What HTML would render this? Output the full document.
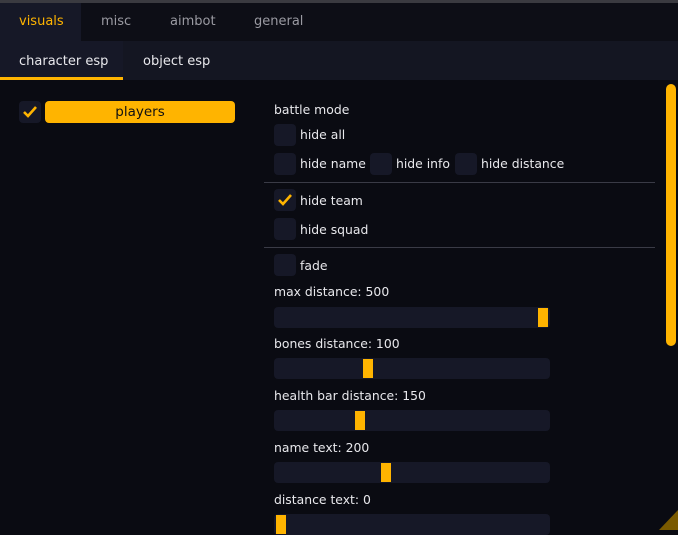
<!DOCTYPE html><html><head><style>
*{margin:0;padding:0;box-sizing:border-box}
html,body{width:678px;height:530px}
body{background:#0a0b12;font-family:"DejaVu Sans","Liberation Sans",sans-serif;font-size:12.4px;color:#e8e8ec;position:relative;overflow:hidden}
.a{position:absolute}
.cb{position:absolute;width:22px;height:22px;background:#161827;border-radius:4px}
.t{position:absolute;line-height:16px;white-space:nowrap}
.sl{position:absolute;left:274px;width:276px;height:21px;background:#161827;border-radius:4px}
.th{position:absolute;top:1px;width:10px;height:19px;background:#ffb400}
.ck svg{position:absolute;left:3px;top:4px}
</style></head><body>
<div class="a" style="left:0;top:0;width:678px;height:3px;background:#3a3a40"></div>
<div class="a" style="left:0;top:3px;width:678px;height:38px;background:#0d0e16"></div>
<div class="a" style="left:0;top:3px;width:81px;height:38px;background:#161827"></div>
<div class="t" style="left:19px;top:14px;color:#ffb400;font-size:13px">visuals</div>
<div class="t" style="left:101px;top:14px;color:#9a9aa2;font-size:13px">misc</div>
<div class="t" style="left:170px;top:14px;color:#9a9aa2;font-size:13px">aimbot</div>
<div class="t" style="left:254px;top:14px;color:#9a9aa2;font-size:13px">general</div>
<div class="a" style="left:0;top:41px;width:678px;height:39px;background:#141622"></div>
<div class="a" style="left:0;top:41px;width:123px;height:39px;background:#161827"></div>
<div class="a" style="left:0;top:77px;width:123px;height:3px;background:#ffb400"></div>
<div class="t" style="left:19px;top:54px;font-size:13px">character esp</div>
<div class="t" style="left:143px;top:54px;font-size:13px">object esp</div>
<div class="cb ck" style="left:19px;top:101px"><svg width="16" height="14" viewBox="0 0 16 14"><path d="M2 7l4 4 8-9" stroke="#ffb400" stroke-width="2.6" fill="none"/></svg></div>
<div class="a" style="left:45px;top:101px;width:190px;height:22px;background:#ffb400;border-radius:4px;color:#111;text-align:center;line-height:23px;font-size:13.5px">players</div>
<div class="a" style="left:666px;top:84px;width:10px;height:262px;background:#ffb400;border-radius:5px"></div>
<svg class="a" style="left:659px;top:510px" width="19" height="20"><path d="M19 0V20H0Z" fill="#7a5a00"/></svg>
<div class="t" style="left:274px;top:102px">battle mode</div>
<div class="cb" style="left:274px;top:124px"></div><div class="t" style="left:300px;top:127px">hide all</div>
<div class="cb" style="left:274px;top:153px"></div><div class="t" style="left:300px;top:156px">hide name</div>
<div class="cb" style="left:370px;top:153px"></div><div class="t" style="left:396px;top:156px">hide info</div>
<div class="cb" style="left:455px;top:153px"></div><div class="t" style="left:481px;top:156px">hide distance</div>
<div class="a" style="left:264px;top:182px;width:391px;height:1px;background:#3a3b46"></div>
<div class="cb ck" style="left:274px;top:189px"><svg width="16" height="14" viewBox="0 0 16 14"><path d="M2 7l4 4 8-9" stroke="#ffb400" stroke-width="2.6" fill="none"/></svg></div><div class="t" style="left:300px;top:193px">hide team</div>
<div class="cb" style="left:274px;top:218px"></div><div class="t" style="left:300px;top:222px">hide squad</div>
<div class="a" style="left:264px;top:247px;width:391px;height:1px;background:#3a3b46"></div>
<div class="cb" style="left:274px;top:254px"></div><div class="t" style="left:300px;top:258px">fade</div>
<div class="t" style="left:274px;top:284px">max distance: 500</div>
<div class="sl" style="top:307px"><div class="th" style="left:264px"></div></div>
<div class="t" style="left:274px;top:336px">bones distance: 100</div>
<div class="sl" style="top:358px"><div class="th" style="left:89px"></div></div>
<div class="t" style="left:274px;top:388px">health bar distance: 150</div>
<div class="sl" style="top:410px"><div class="th" style="left:81px"></div></div>
<div class="t" style="left:274px;top:440px">name text: 200</div>
<div class="sl" style="top:462px"><div class="th" style="left:107px"></div></div>
<div class="t" style="left:274px;top:492px">distance text: 0</div>
<div class="sl" style="top:514px"><div class="th" style="left:2px"></div></div>
</body></html>
